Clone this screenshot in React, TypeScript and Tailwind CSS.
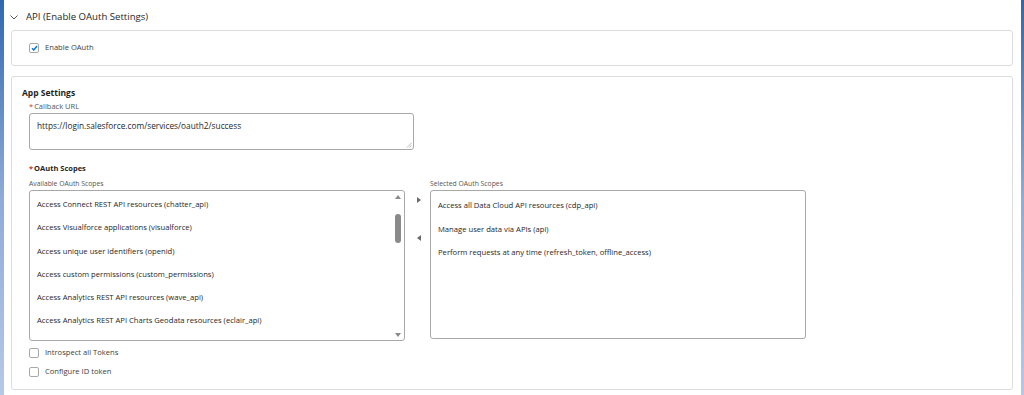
import React from "react";

const available = [
  "Access Connect REST API resources (chatter_api)",
  "Access Visualforce applications (visualforce)",
  "Access unique user identifiers (openid)",
  "Access custom permissions (custom_permissions)",
  "Access Analytics REST API resources (wave_api)",
  "Access Analytics REST API Charts Geodata resources (eclair_api)",
];

const selected = [
  "Access all Data Cloud API resources (cdp_api)",
  "Manage user data via APIs (api)",
  "Perform requests at any time (refresh_token, offline_access)",
];

function Checkbox({ checked }: { checked?: boolean }) {
  return (
    <div className="w-[10px] h-[10px] border border-[#a8a8a8] rounded-[2px] bg-white flex items-center justify-center">
      {checked && (
        <svg width="7" height="6" viewBox="0 0 7 6">
          <path d="M1 3.2 L2.8 5 L6 1" fill="none" stroke="#0176d3" strokeWidth="1.4" />
        </svg>
      )}
    </div>
  );
}

export default function App() {
  return (
    <div
      className="flex w-[1024px] h-[395px] bg-white overflow-hidden text-[#1f1f1f]"
      style={{ fontFamily: "'Open Sans', 'Noto Sans', sans-serif" }}
    >
      <div className="w-[4px] h-full bg-gradient-to-b from-[#2f68b0] via-[#8fabd8] to-[#b6c8e8]" />
      <div className="flex-1 flex flex-col pl-[7px] pr-[8px]">
        {/* header */}
        <div className="h-[30px] flex items-center pt-[4px]">
          <svg width="8" height="5" viewBox="0 0 8 5" className="-ml-[1px]">
            <path d="M0.5 0.5 L4 4 L7.5 0.5" fill="none" stroke="#555" strokeWidth="1" />
          </svg>
          <span className="ml-[8px] text-[9.6px] leading-[12px] text-[#1f1f1f]">
            API (Enable OAuth Settings)
          </span>
        </div>

        {/* enable oauth box */}
        <div className="h-[36px] border border-[#dcdcdc] rounded-[3px] flex items-center pl-[17px]">
          <Checkbox checked />
          <span className="ml-[6px] text-[7.6px] text-[#3e3e3c]">Enable OAuth</span>
        </div>

        {/* app settings box */}
        <div className="mt-[10px] border border-[#dcdcdc] rounded-[3px] pt-[10px] pb-[11px] pl-[10px] flex flex-col">
          <div className="h-[12px] leading-[12px] text-[8.5px] font-bold text-[#1f1f1f]">App Settings</div>
          <div className="ml-[7px] flex flex-col">
            <div className="mt-[1px] h-[12px] leading-[12px] text-[7.5px] text-[#555]">
              <span className="text-[#c23934] mr-[1px]">*</span>Callback URL
            </div>
            <div className="mt-[1px] w-[385px] h-[37px] border border-[#a8a8a8] rounded-[3px] relative px-[7px] pt-[6px]">
              <div className="text-[8.3px] leading-[12px] text-[#1f1f1f]">
                https://login.salesforce.com/services/oauth2/success
              </div>
              <svg width="6" height="6" viewBox="0 0 6 6" className="absolute right-[1px] bottom-[1px]">
                <path d="M5.5 1 L1 5.5 M5.5 3.5 L3.5 5.5" stroke="#999" strokeWidth="0.7" />
              </svg>
            </div>
            <div className="mt-[12px] h-[12px] leading-[12px] text-[7.5px] font-bold text-[#1f1f1f]">
              <span className="text-[#c23934] mr-[1px]">*</span>OAuth Scopes
            </div>
            <div className="mt-[4px] flex">
              <div className="flex flex-col w-[376px]">
                <div className="h-[12px] leading-[12px] text-[6.8px] text-[#555]">Available OAuth Scopes</div>
                <div className="h-[151px] border border-[#a8a8a8] rounded-[3px] flex">
                  <div className="flex-1 flex flex-col pl-[7px] pt-[7px]">
                    {available.map((s) => (
                      <div key={s} className="h-[23.3px] leading-[12px] text-[7.65px] text-[#1f1f1f]">
                        {s}
                      </div>
                    ))}
                  </div>
                  <div className="w-[12px] flex flex-col items-center pt-[4px] pb-[3px]">
                    <svg width="6" height="4" viewBox="0 0 6 4">
                      <path d="M0 4 L3 0 L6 4 Z" fill="#8a8a8a" />
                    </svg>
                    <div className="mt-[15px] w-[6px] h-[29px] rounded-[3px] bg-[#8a8a8a]" />
                    <div className="flex-1" />
                    <svg width="6" height="4" viewBox="0 0 6 4">
                      <path d="M0 0 L3 4 L6 0 Z" fill="#8a8a8a" />
                    </svg>
                  </div>
                </div>
              </div>
              <div className="w-[25px] flex flex-col items-center pt-[19px] pl-[2px]">
                <svg width="4" height="6" viewBox="0 0 4 6">
                  <path d="M0 0 L4 3 L0 6 Z" fill="#6b6b6b" />
                </svg>
                <svg width="4" height="6" viewBox="0 0 4 6" className="mt-[32px]">
                  <path d="M4 0 L0 3 L4 6 Z" fill="#6b6b6b" />
                </svg>
              </div>
              <div className="flex flex-col w-[376px]">
                <div className="h-[12px] leading-[12px] text-[6.8px] text-[#555]">Selected OAuth Scopes</div>
                <div className="h-[149px] border border-[#a8a8a8] rounded-[3px] flex flex-col pl-[7px] pt-[8px]">
                  {selected.map((s) => (
                    <div key={s} className="h-[23.5px] leading-[12px] text-[7.65px] text-[#1f1f1f]">
                      {s}
                    </div>
                  ))}
                </div>
              </div>
            </div>
            <div className="mt-[6px] h-[12px] flex items-center">
              <Checkbox />
              <span className="ml-[6px] text-[7.6px] text-[#3e3e3c]">Introspect all Tokens</span>
            </div>
            <div className="mt-[7px] h-[12px] flex items-center">
              <Checkbox />
              <span className="ml-[6px] text-[7.6px] text-[#3e3e3c]">Configure ID token</span>
            </div>
          </div>
        </div>
      </div>
      <div className="w-[3px] h-full bg-gradient-to-b from-[#2f68b0] via-[#8fabd8] to-[#b6c8e8]" />
    </div>
  );
}
